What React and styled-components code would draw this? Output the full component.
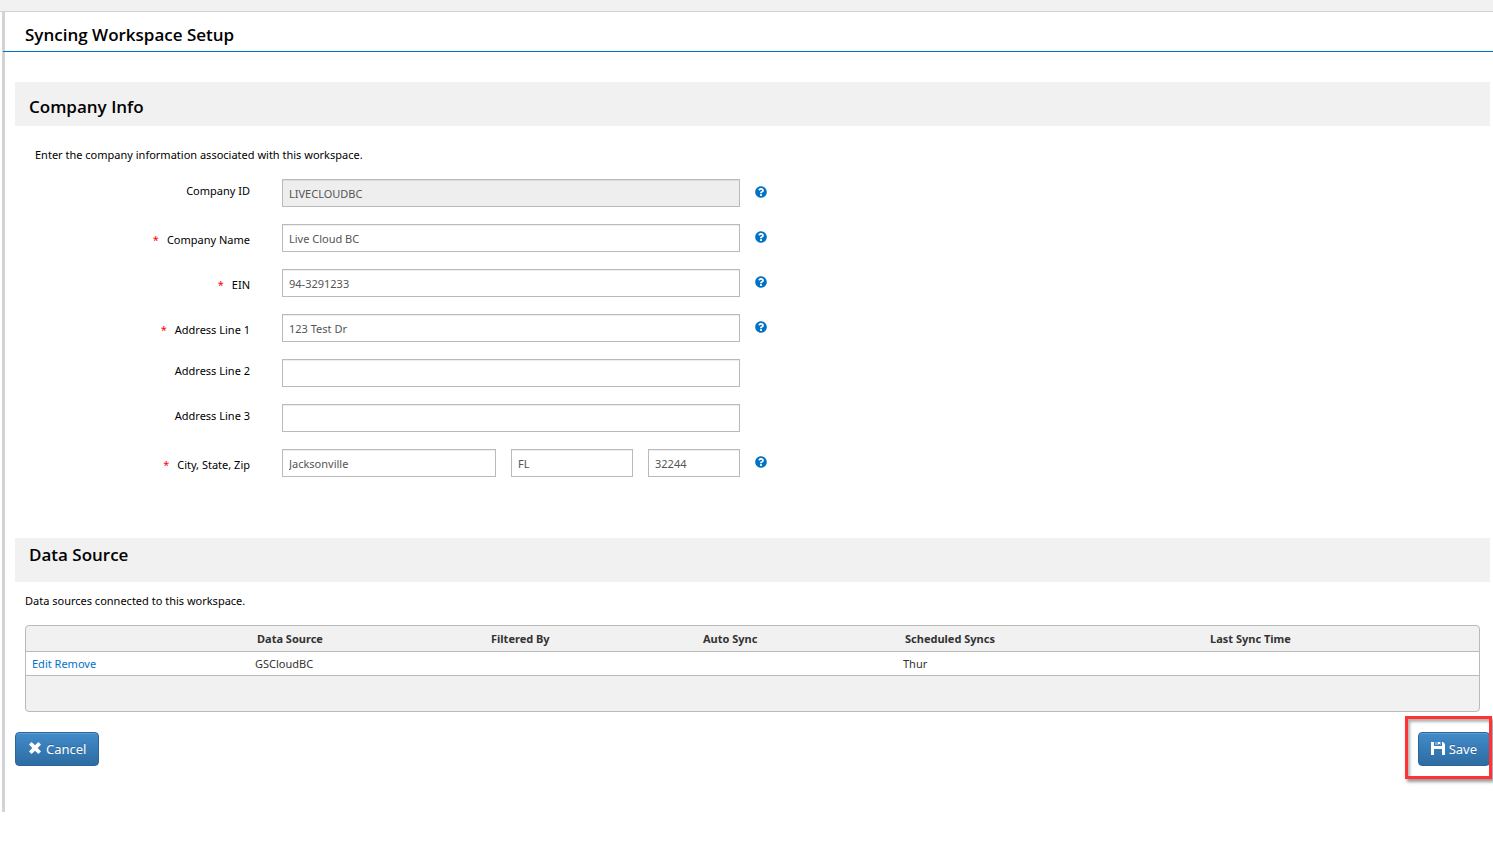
import React from 'react';
import styled, { createGlobalStyle, css } from 'styled-components';
import { FaQuestionCircle } from 'react-icons/fa';

const GlobalStyle = createGlobalStyle`
  * {
    box-sizing: border-box;
  }

  body {
    margin: 0;
    background: #fff;
    color: #000;
    font-family: "Noto Sans", "Open Sans", sans-serif;
    font-size: 11px;
    line-height: 16px;
  }

  h1, h2, p {
    margin: 0;
  }
`;

const TopBar = styled.div`
  height: 12px;
  background: #f1f1f1;
  border-bottom: 1px solid #d3d3d3;
`;

const Panel = styled.main`
  margin-left: 2px;
  padding-bottom: 46px;
  border-left: 3px solid #d3d3d3;
`;

const PageTitle = styled.h1`
  margin-left: -2px;
  padding: 11px 22px 4px;
  border-bottom: 1px solid #0072c6;
  font-family: "Open Sans", "Noto Sans", sans-serif;
  font-size: 17px;
  font-weight: 600;
  line-height: 24px;
`;

const Content = styled.div`
  padding: 30px 3px 0 10px;
`;

const SectionTitle = styled.h2`
  height: 44px;
  padding: ${({ $raised }) => ($raised ? '5px' : '13px')} 14px 0;
  background: #f1f1f1;
  font-family: "Open Sans", "Noto Sans", sans-serif;
  font-size: 17px;
  font-weight: 600;
  line-height: 24px;
`;

const Description = styled.p`
  padding: ${({ $indent }) => ($indent ? '21px 20px 16px' : '11px 10px 16px')};
`;

const Form = styled.form`
  display: grid;
  gap: 17px;
  padding-bottom: 61px;
`;

const FormRow = styled.div`
  display: grid;
  grid-template-columns: 267px minmax(0, 458px) auto;
  height: 28px;
`;

const Label = styled.label`
  padding-top: ${({ $required }) => ($required ? '8px' : '4px')};
  padding-right: 32px;
  text-align: right;
`;

const Required = styled.span`
  margin-right: 8px;
  color: #f00;
`;

const Fields = styled.div`
  display: grid;
  grid-template-columns: ${({ $columns }) => $columns || '1fr'};
  gap: 15px;
`;

const Input = styled.input`
  width: 100%;
  min-width: 0;
  height: 28px;
  padding: 0 6px;
  border: 1px solid #bababa;
  border-radius: 0;
  outline: none;
  box-shadow: inset 0 1px 1px rgba(0, 0, 0, 0.075);
  background: #fff;
  color: #555;
  font: inherit;

  &:disabled {
    background: #eee;
  }
`;

const HelpButton = styled.button`
  display: flex;
  justify-self: start;
  height: 12px;
  margin: 7px 0 0 15px;
  padding: 0;
  border: none;
  background: none;
  color: #0072c6;
  font-size: 12px;
  cursor: pointer;
`;

const TableFrame = styled.div`
  margin: 0 10px 20px;
  overflow: hidden;
  border: 1px solid #bababa;
  border-radius: 4px;
  background: #f1f1f1;
`;

const Table = styled.table`
  width: 100%;
  border-spacing: 0;
  table-layout: fixed;
  color: #333;
`;

const Column = styled.col`
  width: ${({ $width }) => $width}px;
`;

const cell = css`
  border-bottom: 1px solid #bababa;
  text-align: left;
  white-space: nowrap;
`;

const HeadCell = styled.th`
  ${cell}
  height: 26px;
  padding: 0 8px;
  font-weight: 700;
`;

const Cell = styled.td`
  ${cell}
  height: 24px;
  padding: 0 6px;
  background: #fff;
`;

const PagerCell = styled.td`
  height: 35px;
  padding: 0;
`;

const Link = styled.a`
  color: #0072c6;
  text-decoration: none;
`;

const Actions = styled.div`
  display: flex;
  justify-content: space-between;
`;

const Button = styled.button`
  display: flex;
  align-items: center;
  gap: 4px;
  height: 34px;
  padding: 0 12px;
  border: 1px solid #2b669a;
  border-radius: 4px;
  box-shadow: inset 0 1px 0 rgba(255, 255, 255, 0.15);
  background: linear-gradient(#428bca, #2d6ca2);
  color: #fff;
  font: inherit;
  font-size: 13px;
  text-shadow: 0 -1px 0 rgba(0, 0, 0, 0.2);
  cursor: pointer;
`;

const Highlight = styled.div`
  position: relative;

  &::after {
    content: '';
    position: absolute;
    inset: -16px -2px -13px -13px;
    border: 3px solid #ff3333;
    box-shadow: 2px 3px 3px rgba(0, 0, 0, 0.4), inset 2px 3px 3px rgba(0, 0, 0, 0.3);
    pointer-events: none;
  }
`;

const Icon = styled.svg`
  margin-bottom: 2px;
`;

const RemoveIcon = () => (
  <Icon width="14" height="14" viewBox="0 0 14 14" fill="currentColor" aria-hidden="true">
    <path d="M3.6 1 7 4.3 10.4 1 13 3.6 9.7 7l3.3 3.4-2.6 2.6L7 9.7 3.6 13 1 10.4 4.3 7 1 3.6z" />
  </Icon>
);

const FloppyIcon = () => (
  <Icon width="14" height="14" viewBox="0 0 14 14" fill="currentColor" aria-hidden="true">
    <path d="M0 1h3v4h8V1h1l2 2v11h-3V8H3v6H0z" />
    <path d="M4 1h4v3H4zM9 1h1v3H9z" opacity="0.35" />
    <path d="M7 1h2v2H7z" />
  </Icon>
);

const rows = [
  { id: 'companyId', label: 'Company ID', value: 'LIVECLOUDBC', disabled: true, help: true },
  { id: 'companyName', label: 'Company Name', value: 'Live Cloud BC', required: true, help: true },
  { id: 'ein', label: 'EIN', value: '94-3291233', required: true, help: true },
  { id: 'address1', label: 'Address Line 1', value: '123 Test Dr', required: true, help: true },
  { id: 'address2', label: 'Address Line 2', value: '' },
  { id: 'address3', label: 'Address Line 3', value: '' },
];

const columns = [
  { title: '', width: 223 },
  { title: 'Data Source', width: 234 },
  { title: 'Filtered By', width: 212 },
  { title: 'Auto Sync', width: 202 },
  { title: 'Scheduled Syncs', width: 305 },
  { title: 'Last Sync Time', width: 277 },
];

const Help = ({ label }) => (
  <HelpButton type="button" aria-label={`Help for ${label}`}>
    <FaQuestionCircle />
  </HelpButton>
);

const App = () => {
  return (
    <>
      <GlobalStyle />
      <TopBar />
      <Panel>
        <PageTitle>Syncing Workspace Setup</PageTitle>
        <Content>
          <SectionTitle>Company Info</SectionTitle>
          <Description $indent>Enter the company information associated with this workspace.</Description>
          <Form>
            {rows.map(({ id, label, value, required, disabled, help }) => (
              <FormRow key={id}>
                <Label htmlFor={id} $required={required}>
                  {required && <Required>*</Required>}
                  {label}
                </Label>
                <Fields>
                  <Input id={id} name={id} type="text" defaultValue={value} disabled={disabled} />
                </Fields>
                {help && <Help label={label} />}
              </FormRow>
            ))}
            <FormRow>
              <Label htmlFor="city" $required>
                <Required>*</Required>
                City, State, Zip
              </Label>
              <Fields $columns="214fr 122fr 92fr">
                <Input id="city" name="city" type="text" defaultValue="Jacksonville" />
                <Input name="state" type="text" aria-label="State" defaultValue="FL" />
                <Input name="zip" type="text" aria-label="Zip" defaultValue="32244" />
              </Fields>
              <Help label="City, State, Zip" />
            </FormRow>
          </Form>

          <SectionTitle $raised>Data Source</SectionTitle>
          <Description>Data sources connected to this workspace.</Description>
          <TableFrame>
            <Table>
              <colgroup>
                {columns.map(({ title, width }) => (
                  <Column key={title} $width={width} />
                ))}
              </colgroup>
              <thead>
                <tr>
                  {columns.map(({ title }) => (
                    <HeadCell key={title}>{title}</HeadCell>
                  ))}
                </tr>
              </thead>
              <tbody>
                <tr>
                  <Cell>
                    <Link href="#edit">Edit</Link> <Link href="#remove">Remove</Link>
                  </Cell>
                  <Cell>GSCloudBC</Cell>
                  <Cell />
                  <Cell />
                  <Cell>Thur</Cell>
                  <Cell />
                </tr>
              </tbody>
              <tfoot>
                <tr>
                  <PagerCell colSpan={columns.length} />
                </tr>
              </tfoot>
            </Table>
          </TableFrame>

          <Actions>
            <Button type="button">
              <RemoveIcon />
              Cancel
            </Button>
            <Highlight>
              <Button type="button">
                <FloppyIcon />
                Save
              </Button>
            </Highlight>
          </Actions>
        </Content>
      </Panel>
    </>
  );
};

export default App;
